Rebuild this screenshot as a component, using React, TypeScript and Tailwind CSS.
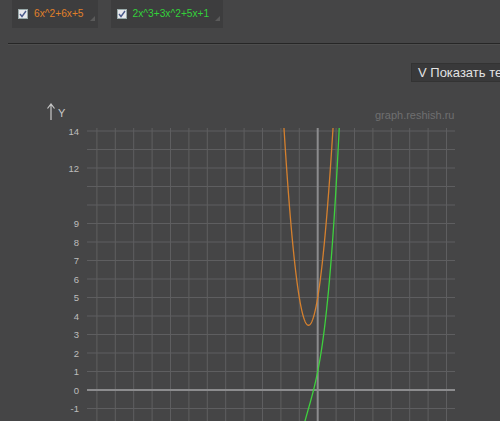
import React from 'react';

const X0 = 317.7;
const Y0 = 390;
const SX = 18.4;
const SY = 18.5;

const px = (x: number) => X0 + x * SX;
const py = (y: number) => Y0 - y * SY;

function curve(f: (x: number) => number, from: number, to: number) {
  const pts: string[] = [];
  for (let x = from; x <= to; x += 0.01) {
    const y = f(x);
    if (y > 30 || y < -30) continue;
    pts.push(`${px(x).toFixed(2)},${py(y).toFixed(2)}`);
  }
  return 'M' + pts.join(' L');
}

const yLabels = [14, 12, 9, 8, 7, 6, 5, 4, 3, 2, 1, 0, -1];

function FuncTab({ label, color }: { label: string; color: string }) {
  return (
    <div className="relative flex items-center h-[28px] pl-[6px] pr-[3px] bg-[#3d3d3e]">
      <span className="flex items-center justify-center w-[10px] h-[10px] bg-[#e8e8ec] border border-[#9aa]">
        <svg width="8" height="8" viewBox="0 0 8 8">
          <path d="M1 4 L3 6.5 L7 1" stroke="#4a5a8a" strokeWidth="1.4" fill="none" />
        </svg>
      </span>
      <span className={`ml-[6px] text-[10.2px] ${color}`}>{label}</span>
      <span className="ml-[6px] mt-[8px] w-0 h-0 border-l-[5px] border-l-transparent border-b-[5px] border-b-[#5a5a5a]" />
    </div>
  );
}

export default function App() {
  const hLines: number[] = [];
  for (let k = -2; k <= 14; k++) hLines.push(py(k));
  const vLines: number[] = [];
  for (let k = -12; k <= 7; k++) if (k !== 0) vLines.push(px(k));

  return (
    <div className="w-[500px] h-[421px] overflow-hidden bg-[#454546] font-['Liberation_Sans',Arial,sans-serif]">
      <div className="flex gap-[13px] pl-[12px]">
        <FuncTab label="6x^2+6x+5" color="text-[#e0802a]" />
        <FuncTab label="2x^3+3x^2+5x+1" color="text-[#33d13a]" />
      </div>
      <div className="ml-[8px] mt-[15px] border-t border-[#262626] border-b border-b-[#4e4e4e] h-[2px]" />
      <div className="flex justify-start mt-[18px] pl-[411px]">
        <div className="shrink-0 whitespace-nowrap h-[19px] pl-[6px] pr-[8px] flex items-center bg-[#39393a] border border-[#333] text-[13px] text-[#e2e2e2]">
          V Показать текстовое решение
        </div>
      </div>
      <svg width="500" height="320" viewBox="0 101 500 320" className="block mt-[19px]">
        <defs>
          <clipPath id="grid">
            <rect x="87" y="128" width="368" height="300" />
          </clipPath>
        </defs>
        <text x="375" y="119" fontSize="11" fill="#6f6f70" fontFamily="Liberation Sans, Arial, sans-serif">
          graph.reshish.ru
        </text>
        <path d="M51 120 L51 104 M47.5 108.5 L51 104 L54.5 108.5" stroke="#c8c8c8" strokeWidth="1.2" fill="none" />
        <text x="58" y="117" fontSize="11" fill="#c8c8c8" fontFamily="Liberation Sans, Arial, sans-serif">Y</text>
        {hLines.map((y, i) => (
          <line key={'h' + i} x1="87" x2="455" y1={y} y2={y} stroke="#5e5e60" strokeWidth="1" />
        ))}
        {vLines.map((x, i) => (
          <line key={'v' + i} x1={x} x2={x} y1="128" y2="421" stroke="#5e5e60" strokeWidth="1" />
        ))}
        <line x1="87" x2="455" y1={Y0} y2={Y0} stroke="#8c8c8e" strokeWidth="2" />
        <line x1={X0} x2={X0} y1="128" y2="421" stroke="#8c8c8e" strokeWidth="2" />
        {yLabels.map((v) => (
          <text
            key={v}
            x="79"
            y={py(v) + 3.5}
            fontSize="9.5"
            textAnchor="end"
            fill="#bdbdbd"
            fontFamily="Liberation Sans, Arial, sans-serif"
          >
            {v}
          </text>
        ))}
        <g clipPath="url(#grid)">
          <path d={curve((x) => 6 * x * x + 6 * x + 5, -3, 2)} stroke="#d5802e" strokeWidth="1.3" fill="none" />
          <path
            d={curve((x) => 2 * x * x * x + 3 * x * x + 5 * x + 1, -3, 2)}
            stroke="#3ed03e"
            strokeWidth="1.3"
            fill="none"
          />
        </g>
      </svg>
    </div>
  );
}
